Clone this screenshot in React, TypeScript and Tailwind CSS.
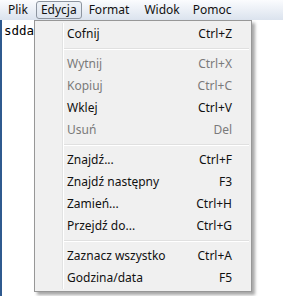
import React from "react";

type Item = { label: string; shortcut: string; disabled?: boolean } | "sep";

const items: Item[] = [
  { label: "Cofnij", shortcut: "Ctrl+Z" },
  "sep",
  { label: "Wytnij", shortcut: "Ctrl+X", disabled: true },
  { label: "Kopiuj", shortcut: "Ctrl+C", disabled: true },
  { label: "Wklej", shortcut: "Ctrl+V" },
  { label: "Usuń", shortcut: "Del", disabled: true },
  "sep",
  { label: "Znajdź...", shortcut: "Ctrl+F" },
  { label: "Znajdź następny", shortcut: "F3" },
  { label: "Zamień...", shortcut: "Ctrl+H" },
  { label: "Przejdź do...", shortcut: "Ctrl+G" },
  "sep",
  { label: "Zaznacz wszystko", shortcut: "Ctrl+A" },
  { label: "Godzina/data", shortcut: "F5" },
];

export default function App() {
  return (
    <div
      className="relative w-[283px] h-[296px] overflow-hidden bg-white text-[12px] leading-none text-[#111]"
      style={{ fontFamily: '"Noto Sans", "Open Sans", sans-serif' }}
    >
      {/* menu bar */}
      <div className="flex h-[20px] items-stretch bg-gradient-to-b from-[#fbfcfe] to-[#dbe3ee] pl-[2px]">
        <div className="flex items-center px-[6px]">Plik</div>
        <div className="my-[1px] ml-[2px] flex items-center rounded-[3px] border border-[#8d95a0] bg-gradient-to-b from-[#eef2f7] to-[#dde4ee] px-[4px]">
          Edycja
        </div>
        <div className="flex items-center pl-[7px] pr-[8px]">Format</div>
        <div className="flex items-center px-[7px]">Widok</div>
        <div className="flex items-center px-[6px]">Pomoc</div>
      </div>

      {/* edit area */}
      <div className="h-[276px] border-l-2 border-[#2f5a8f] pl-[2px] pt-[3px]">
        <div
          className="text-[12.5px] leading-[15px] text-black"
          style={{ fontFamily: '"DejaVu Sans Mono", monospace' }}
        >
          sdda
        </div>
      </div>

      {/* dropdown */}
      <div className="absolute left-[34px] top-[20px] flex w-[218px] border border-[#979797] bg-[#f0f0f0] py-[2px] shadow-[3px_3px_3px_rgba(0,0,0,0.35)]">
        <div className="w-[28px] shrink-0 border-r border-[#e2e3e3]" />
        <div className="w-px shrink-0 bg-white" />
        <div className="flex flex-1 flex-col">
          {items.map((it, i) =>
            it === "sep" ? (
              <div key={i} className="flex h-[8px] flex-col justify-center pr-[2px]">
                <div className="h-px bg-[#e0e0e0]" />
                <div className="h-px bg-white" />
              </div>
            ) : (
              <div
                key={i}
                className={
                  "flex h-[22px] items-center justify-between pl-[3px] pr-[19px] " +
                  (it.disabled ? "text-[#7a7a7a]" : "text-[#111]")
                }
              >
                <span>{it.label}</span>
                <span>{it.shortcut}</span>
              </div>
            )
          )}
        </div>
      </div>
    </div>
  );
}
